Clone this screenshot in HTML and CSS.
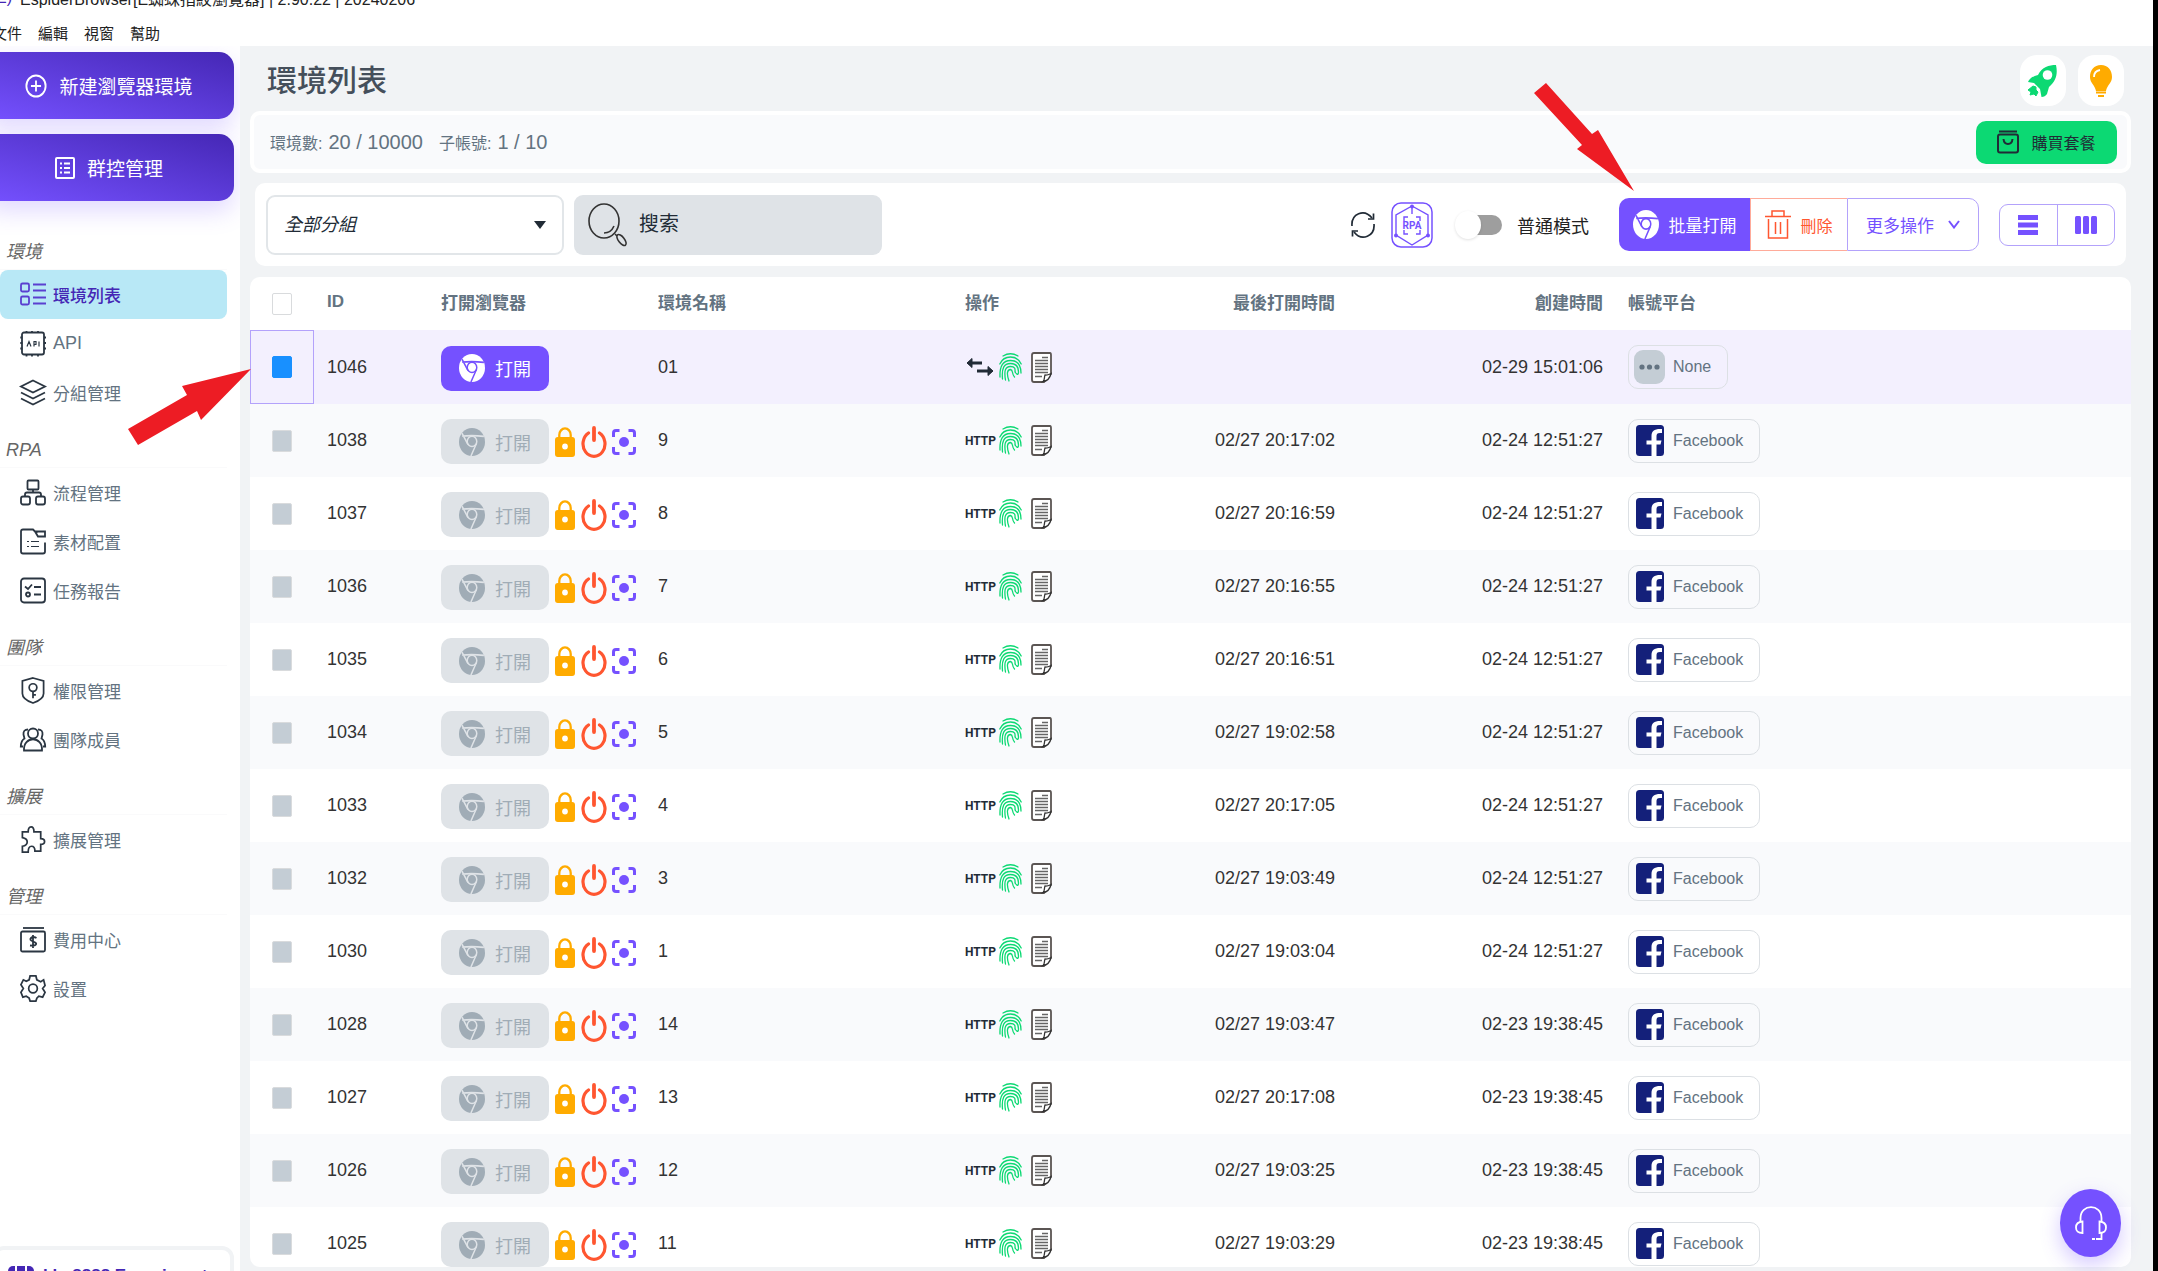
FILE: index.html
```html
<!DOCTYPE html>
<html lang="zh-Hant">
<head>
<meta charset="utf-8">
<title>EspiderBrowser</title>
<link rel="stylesheet" href="styles.css">
</head>
<body>
<svg class="sprite" aria-hidden="true">
  <symbol id="chrome" viewBox="0 0 24 24" preserveAspectRatio="none"><circle cx="12" cy="12" r="12" fill="currentColor"/><g fill="none" stroke="var(--cut)" stroke-width="1.4"><circle cx="12" cy="11.500" r="4.400"/><path d="M3 7Q12 6 23 7.200M2.800 4.500L8.200 14M16 13.500L11 24"/></g></symbol>
  <symbol id="lock" viewBox="0 0 21 30" preserveAspectRatio="none"><path d="M4.500 12V8a6 6.600 0 0 1 12 0v4" fill="none" stroke="#ffab00" stroke-width="2.400"/><rect y="10" width="21" height="20" rx="3" fill="#ffab00"/><circle cx="10.500" cy="19.500" r="3" fill="#fff"/></symbol>
  <symbol id="power" viewBox="0 0 26 32" preserveAspectRatio="none"><path d="M7.500 7A11 12.500 0 1 0 18.500 7" fill="none" stroke="#ff5630" stroke-width="3.200" stroke-linecap="round"/><path d="M13 2v12" stroke="#ff5630" stroke-width="3.800" stroke-linecap="round"/></symbol>
  <symbol id="scan" viewBox="0 0 24 26" preserveAspectRatio="none"><path d="M1.500 8V4Q1.500 1.500 4 1.500H7.500M16.500 1.500H20Q22.500 1.500 22.500 4V8M22.500 18v4q0 2.500-2.500 2.500H16.500M7.500 24.500H4Q1.500 24.500 1.500 22V18" fill="none" stroke="#7551ff" stroke-width="3"/><circle cx="12" cy="13" r="5" fill="#7551ff"/></symbol>
  <symbol id="finger" viewBox="0 0 23 29" preserveAspectRatio="none"><g fill="none" stroke="#0cd973" stroke-width="1.300" stroke-linecap="round"><path d="M4 3Q11.500-1.500 19 3M.8 11Q4 4 11.500 4T22.200 11M1 24C.5 13 4 7.500 11.500 7.500S22 13 22 20M3.500 26C2.500 15 5 10.500 11.500 10.500S19.500 15 19.500 19 16.500 21 16 18M6.500 27C5 18 6 13.500 11.500 13.500S16 17 16 19M10 28C7.500 21 8 16.500 11.500 16.500 14.500 17 12.500 21 15.500 24 20 24 21.500 22M11 22Q12 26 18 26.500M12 26L14 28.500"/></g></symbol>
  <symbol id="doc" viewBox="0 0 21 31" preserveAspectRatio="none"><path d="M3 1H19Q20 1 20 3V22L13 30H3Q1 30 1 28V3Q1 1 3 1Z" fill="#fff" stroke="#5b5553" stroke-width="1.800"/><path d="M11 5.500h6M4 8.500h13M4 11.500h13M4 14.500h13M4 17.500h13M4 20.500h13M4 24.500h7" stroke="#666" stroke-width="1.400"/><path d="M12 29.500C14 28 13 25 14 23 16 23.500 18 22.500 20 21.500 19 26 16 29 12 29.500Z" fill="#fff" stroke="#333" stroke-width="1.300"/></symbol>
  <symbol id="swap" viewBox="0 0 30 24"><path d="M6 8H17M12 16H24" stroke="#212b36" stroke-width="3"/><path d="M2 8L7 3.500V12.500ZM28 16L23 11.500V20.500Z" fill="#212b36" stroke="#212b36" stroke-linejoin="round"/></symbol>
  <symbol id="fb" viewBox="0 0 28 31" preserveAspectRatio="none"><rect width="28" height="31" rx="3.500" fill="#14207a"/><path d="M15.500 31V19.500H10.500V15.500H15.500V11C15.500 6 18.500 3.500 26 4V8C21.500 7.500 20.500 8.500 20.500 11.500V15.500H25.500L24.500 19.500H20.500V31Z" fill="#fff"/></symbol>
</svg>

<div class="window">
  <header class="titlebar">
    <span class="app-mark">(E)</span>
    <span class="app-title">EspiderBrowser[E蜘蛛指紋瀏覽器] | 2.90.22 | 20240206</span>
    <span class="window-controls">
      <svg width="14" height="14" viewBox="0 0 14 14"><rect x="1" y="1" width="12" height="12" fill="none" stroke="#222" stroke-width="1.500"/></svg>
      <svg width="14" height="14" viewBox="0 0 14 14"><path d="M1 1L13 13M13 1L1 13" stroke="#222" stroke-width="1.500"/></svg>
    </span>
  </header>
  <nav class="menubar"><a href="#">文件</a><a href="#">編輯</a><a href="#">視窗</a><a href="#">幫助</a></nav>

  <div class="body">
    <aside class="sidebar">
      <div class="primary-actions">
        <button class="big-button" type="button"><svg width="22" height="24" viewBox="0 0 24 24" preserveAspectRatio="none"><g fill="none" stroke="#fff" stroke-width="2"><circle cx="12" cy="12" r="10.500"/><path d="M12 6.500V17.500M6.500 12H17.500"/></g></svg>新建瀏覽器環境</button>
        <button class="big-button" type="button"><svg width="20" height="22" viewBox="0 0 20 22"><rect x="1" y="1" width="18" height="20" rx="1" fill="none" stroke="#fff" stroke-width="2"/><path d="M5 6.500h2M9 6.500h6M5 11h2M9 11h6M5 15.500h2M9 15.500h6" stroke="#fff" stroke-width="2"/></svg>群控管理</button>
      </div>
      <nav class="side-nav">
        <h2>環境</h2>
        <a class="active" href="#"><svg viewBox="0 0 26 26"><rect x="1" y="2" width="8" height="8" rx="1.500"/><rect x="1" y="15" width="8" height="8" rx="1.500"/><path d="M13 3h13M13 9h13M13 16h13M13 22h13"/></svg>環境列表</a>
        <a href="#" class="latin"><svg viewBox="0 0 26 26"><rect x="2" y="2" width="22" height="22" rx="2"/><path d="M6.500 .5v2M12 .5v2M18 .5v2M6.500 24v2M12 24v2M18 24v2M.3 7h2M.3 12.500h2M.3 18h2M24 7h2M24 12.500h2M24 18h2"/><path class="thin" d="M7 16L9 11 11 16M14 16V11h2v3h-2M19 11v5"/></svg>API</a>
        <a href="#"><svg viewBox="0 0 26 26"><path d="M13 1L25 7 13 13 1 7ZM1 13L13 19 25 13M1 19L13 25 25 19"/></svg>分組管理</a>
        <h2>RPA</h2>
        <a href="#"><svg viewBox="0 0 26 26"><rect x="7.500" y="1" width="11" height="9" rx="1"/><rect x="1" y="17" width="9" height="8" rx="2"/><rect x="16" y="17" width="9" height="8" rx="2"/><path d="M13 10v3M5 17V15Q5 13 7 13H19Q21 13 21 15V17"/></svg>流程管理</a>
        <a href="#"><svg viewBox="0 0 26 26"><path d="M25 14V23Q25 25 23 25H3Q1 25 1 23V3Q1 1 3 1H13L17 5M15 3H25V8H18L15 3"/><path class="thin" d="M7 13h2M11 13h8M7 18h2M11 18h8"/></svg>素材配置</a>
        <a href="#"><svg viewBox="0 0 26 26"><rect x="1" y="1" width="24" height="24" rx="3"/><path d="M5 9L8 11.500 12 7M14 9.500h7M14 17h7"/><circle cx="8" cy="17" r="2"/></svg>任務報告</a>
        <h2>團隊</h2>
        <a href="#"><svg viewBox="0 0 26 28"><path d="M13 1L24 4V17Q24 23 13 27 2 23 2 17V4Z"/><circle cx="13" cy="11" r="4"/><path d="M13 15V22M13 18.500h3"/></svg>權限管理</a>
        <a href="#"><svg viewBox="0 0 26 26"><circle cx="13" cy="7" r="5"/><path d="M4 24C3 9 23 9 22 24ZM8 3Q3 3 3.500 8L4.500 12Q1 14 .8 20H3M18 3Q23 3 22.500 8L21.500 12Q25 14 25.200 20H23"/></svg>團隊成員</a>
        <h2>擴展</h2>
        <a href="#"><svg viewBox="0 0 26 28"><path d="M2 6H8Q8 1 11 1T14 6H21V13Q25 13 25 16T21 19V26H15Q15 21 11.500 21T8 27H2V21Q7 20 7 16.500T2 12Z"/></svg>擴展管理</a>
        <h2>管理</h2>
        <a href="#"><svg viewBox="0 0 26 26"><path d="M3 1.500H24"/><rect x="1" y="5" width="24" height="20" rx="1.500"/><path d="M16.500 11.500Q13 9.500 11 11.500T13 15 16 18 10 19M13 8.500V21.500"/></svg>費用中心</a>
        <a href="#"><svg viewBox="0 0 26 28"><path d="M10 1H16L17 5 21 7 24 5 25.500 11 23 14 25.500 18 23 23 19 22 17 24 16 27H10L9 24 6 22 2.500 23 .5 18 3 14 .5 10 3 5 6 6.500 9 5Z"/><circle cx="13" cy="14" r="4.500"/></svg>設置</a>
      </nav>
      <div class="account-card"><svg width="26" height="26" viewBox="0 0 26 26"><rect width="26" height="26" rx="5" fill="#4527b5"/><path d="M8 0v7M18 0v7" stroke="#fff" stroke-width="2"/></svg>klm8888 Experiment</div>
    </aside>

    <main class="main">
      <div class="page-head">
        <h1>環境列表</h1>
        <button class="round-button" type="button" aria-label="rocket"><svg width="30" height="34" viewBox="0 0 30 34"><path d="M28 1C30 10 28 17 21 23L19 30Q17 33 13.500 33L12 25 6 19 0 18Q2 13 10 11C14 3 21 1 28 1Z" fill="#0cd973"/><circle cx="19.500" cy="11" r="4.800" fill="#fff"/><path d="M5 22L8 23 8 26 10 28 8 32 6 30 2 31 3 28 0 26Z" fill="#0cd973" stroke="#0cd973"/></svg></button>
        <button class="round-button" type="button" aria-label="tips"><svg width="24" height="34" viewBox="0 0 24 34"><path d="M12 1C5 1 1 6 1 13 1 19 6 21 7 27H17C18 21 23 19 23 13 23 6 19 1 12 1Z" fill="#ffab00"/><path d="M7 28.500H17M9 32H15" stroke="#ffab00" stroke-width="2"/><path d="M5 13Q5 7 11 6" fill="none" stroke="#fff" stroke-width="1.800"/></svg></button>
      </div>

      <section class="quota">
        <span>環境數:</span><b>20 / 10000</b><span class="second">子帳號:</span><b>1 / 10</b>
        <button class="buy" type="button"><svg width="22" height="24" viewBox="0 0 22 24"><g fill="none" stroke="#212b36" stroke-width="2"><path d="M2 1.500H20"/><rect x="1" y="4.500" width="20" height="18" rx="2"/><path d="M6.500 9Q7 14 11 14T15.500 9"/></g></svg>購買套餐</button>
      </section>

      <section class="toolbar">
        <div class="group-select">
          <select aria-label="分組"><option>全部分組</option></select>
          <svg width="12" height="8" viewBox="0 0 12 8"><path d="M0 0H12L6 8Z" fill="#212b36"/></svg>
        </div>
        <label class="search">
          <svg width="40" height="44" viewBox="0 0 40 44"><g fill="none" stroke="#333" stroke-width="1.600"><ellipse cx="16" cy="18" rx="15" ry="17"/><path d="M26 23Q23 30 16 30M27 31L29 33"/><ellipse cx="33.500" cy="37" rx="3" ry="6.500" transform="rotate(-38 33.500 37)"/></g></svg>
          <input type="text" placeholder="搜索" aria-label="搜索">
        </label>
        <button class="bare refresh" type="button" aria-label="refresh"><svg width="24" height="28" viewBox="0 0 24 28"><g fill="none" stroke="#212b36" stroke-width="1.700"><path d="M1 15C0 3 13-3 21 7M23 13C24 25 11 31 3 21"/><path d="M22.500 2.500V8H17M1.500 25.500V20H7"/></g></svg></button>
        <button class="bare rpa" type="button" aria-label="RPA"><svg width="42" height="46" viewBox="0 0 42 46"><rect x="1" y="1" width="40" height="44" rx="9" fill="none" stroke="#7551ff" stroke-width="1.500"/><g fill="none" stroke="#7551ff" stroke-width="1.400"><path d="M21 4L37 13V33L21 43 5 33V13ZM21 4V12"/><path d="M13 19V15H17M25 15H29V19M13 28V32H17M25 32H29V28"/></g><circle cx="21" cy="4.500" r="2" fill="#7551ff"/><circle cx="5" cy="33.500" r="2" fill="#7551ff"/><circle cx="37" cy="33.500" r="2" fill="#7551ff"/><text x="21" y="27" text-anchor="middle">RPA</text></svg></button>
        <label class="mode"><input type="checkbox" role="switch">普通模式</label>
        <div class="batch">
          <button class="batch-open" type="button"><svg width="26" height="29"><use href="#chrome"/></svg>批量打開</button>
          <button class="batch-delete" type="button"><svg width="26" height="30" viewBox="0 0 26 30"><path d="M0 6.500H26M7 6V1H19V6M3.500 9V28H22.500V9M10.500 12V24M15.500 12V24" fill="none" stroke="#ff5630" stroke-width="1.500"/></svg>刪除</button>
          <button class="batch-more" type="button">更多操作<svg width="12" height="9" viewBox="0 0 12 9"><path d="M1 1L6 7.500 11 1" fill="none" stroke="#7551ff" stroke-width="2"/></svg></button>
        </div>
        <div class="views">
          <button type="button" aria-label="rows"><svg width="20" height="20" viewBox="0 0 20 20"><path d="M0 2.500H20M0 10H20M0 17.500H20" stroke="#7551ff" stroke-width="5"/></svg></button>
          <button type="button" aria-label="columns"><svg width="22" height="18" viewBox="0 0 22 18"><g fill="#7551ff"><rect width="6" height="18" rx="1.500"/><rect x="8" width="6" height="18" rx="1.500"/><rect x="16" width="6" height="18" rx="1.500"/></g></svg></button>
        </div>
      </section>

      <section class="list">
        <table>
          <colgroup><col class="c-check"><col class="c-id"><col class="c-open"><col class="c-name"><col class="c-ops"><col class="c-last"><col class="c-made"><col></colgroup>
          <thead><tr><th class="check"><input type="checkbox" aria-label="全選"></th><th>ID</th><th>打開瀏覽器</th><th>環境名稱</th><th>操作</th><th class="right">最後打開時間</th><th class="right">創建時間</th><th>帳號平台</th></tr></thead>
          <tbody id="rows"></tbody>
        </table>
      </section>
    </main>
  </div>

  <button class="support" type="button" aria-label="support"><svg width="32" height="34" viewBox="0 0 32 34"><g fill="none" stroke="#fff" stroke-width="1.800"><path d="M5.500 16V12C5.500-2.500 26.500-2.500 26.500 12V16"/><path d="M7.500 15.500V27Q1 27 1 21.500T7.500 15.500ZM24.500 15.500V27Q31 27 31 21.500T24.500 15.500Z"/><path d="M26.500 27V33H21M20 33H17"/></g></svg></button>
  <svg class="pointer pointer-row" width="123" height="77" viewBox="0 0 123 77"><path d="M123 0L54 17 59 26 0 60 10 76 69 42 73 51Z" fill="#ed1c24"/></svg>
  <svg class="pointer pointer-batch" width="100" height="108" viewBox="0 0 100 108"><path d="M100 108L64 47 58 51 12 0 0 10 48 62 43 66Z" fill="#ed1c24"/></svg>
</div>
<script src="script.js"></script>
</body>
</html>
```
FILE: styles.css
```css
* { box-sizing: border-box; }
html, body { height: 100%; }
body {
  margin: 0;
  overflow: hidden;
  font-family: "Liberation Sans", "Noto Sans CJK TC", sans-serif;
  font-size: 18px;
  color: #333;
  background: #fff;
}
a { color: inherit; text-decoration: none; }
button, input, select { font: inherit; color: inherit; margin: 0; }
button { border: 0; background: none; padding: 0; display: flex; align-items: center; justify-content: center; cursor: pointer; }
svg { flex: none; display: block; }
.sprite { position: absolute; width: 0; height: 0; }

.window { position: relative; height: 100vh; overflow: hidden; display: flex; flex-direction: column; border-right: 5px solid #000; }
.titlebar { flex: none; height: 32px; margin-top: -18px; display: flex; align-items: center; gap: 8px; font-size: 16px; white-space: nowrap; color: #222; }
.app-mark { width: 12px; direction: rtl; color: #4527b5; overflow: hidden; }
.window-controls { margin-left: auto; margin-right: 22px; display: flex; gap: 46px; padding-bottom: 10px; }
.menubar { flex: none; height: 32px; padding-top: 4px; margin-left: -8px; display: flex; align-items: center; gap: 16px; font-size: 15px; color: #222; }

.body { flex: 1; min-height: 0; display: flex; }
.sidebar { flex: none; width: 240px; padding-top: 6px; display: flex; flex-direction: column; overflow: hidden; }
.primary-actions { display: grid; gap: 15px; margin: 0 6px 18px -16px; }
.big-button { height: 67px; border-radius: 15px; gap: 12px; color: #fff; font-size: 19px; background: linear-gradient(15deg, #7551ff, #4527b5); box-shadow: 0 10px 24px rgba(117, 81, 255, .22); }
.side-nav { display: flex; flex-direction: column; padding-right: 13px; }
.side-nav h2 { margin: 0; height: 51px; padding: 16px 0 0 6px; border-bottom: 1px solid #fafafb; font-size: 18px; font-weight: 400; font-style: italic; line-height: 34px; color: #666; }
.side-nav a { height: 49px; padding-left: 20px; display: flex; align-items: center; gap: 7px; font-size: 17px; color: #637381; border-radius: 8px; }
.side-nav .latin { font-size: 18px; }
.side-nav svg { width: 26px; height: 27px; fill: none; stroke: #2b3642; stroke-width: 1.8; overflow: visible; }
.side-nav svg .thin { stroke-width: 1.2; }
.side-nav .active { background: #b8e8f6; color: #4527b5; font-weight: 500; }
.side-nav .active svg { stroke: #5a3fd0; }
.account-card { flex: none; height: 60px; margin: auto 6px -35px -8px; padding: 16px 0 0 12px; border: 4px solid #f1f3f5; border-radius: 12px; display: flex; gap: 9px; font-size: 17px; font-weight: 700; color: #4527b5; white-space: nowrap; }

.main { flex: 1; min-width: 0; padding: 0 22px 4px 10px; background: #f1f3f5; display: flex; flex-direction: column; }
.page-head { flex: none; height: 65px; padding: 4px 7px 0 17px; display: flex; align-items: center; gap: 12px; }
.page-head h1 { margin: 0 auto 0 0; font-size: 30px; font-weight: 500; line-height: 40px; color: #454f5b; }
.round-button { width: 46px; height: 51px; border-radius: 17px; background: #fff; }
.quota { flex: none; height: 62px; padding: 0 10px 0 16px; border: 4px solid #fff; border-radius: 10px; background: #f9fafc; display: flex; align-items: center; gap: 6px; font-size: 16px; color: #637381; }
.quota b { font-size: 20px; font-weight: 400; }
.quota .second { margin-left: 10px; }
.buy { width: 141px; height: 43px; margin-left: auto; border-radius: 10px; gap: 12px; background: #0cd973; color: #212b36; font-size: 16px; }

.toolbar { flex: none; height: 83px; margin: 10px 5px 11px; padding: 0 11px; border-radius: 10px; background: #fff; display: flex; align-items: center; }
.group-select { width: 298px; height: 60px; display: grid; align-items: center; }
.group-select > * { grid-area: 1 / 1; }
.group-select select { width: 100%; height: 100%; padding: 0 16px; appearance: none; border: 2px solid #e2e6e9; border-radius: 9px; background: #fff; font-style: italic; color: #212b36; }
.group-select svg { justify-self: end; margin-right: 18px; pointer-events: none; }
.search { width: 308px; height: 60px; margin: 0 auto 0 10px; padding-left: 14px; border-radius: 9px; background: #dfe3e7; display: flex; align-items: center; gap: 11px; }
.search input { flex: 1; min-width: 0; border: 0; padding: 0; outline: 0; background: none; font-size: 20px; }
.search input::placeholder { color: #212b36; opacity: 1; }
.rpa { margin: 0 22px 0 16px; }
.rpa text { font-family: Roboto, sans-serif; font-size: 10px; font-weight: 700; fill: #7551ff; }
.mode { display: flex; align-items: center; gap: 15px; margin-right: 30px; white-space: nowrap; color: #222; }
.mode input { appearance: none; position: relative; width: 47px; height: 20px; border-radius: 10px; background: linear-gradient(90deg, #fff 12px, #9e9e9e 12px); }
.mode input::before { content: ""; position: absolute; left: 0; top: -4px; width: 26px; height: 28px; border-radius: 50%; background: #fff; box-shadow: 0 1px 3px rgba(0, 0, 0, .12); }
.batch { height: 53px; display: flex; margin-right: 20px; font-size: 17px; }
.batch-open { width: 131px; gap: 10px; border-radius: 10px 0 0 10px; background: #7551ff; color: #fff; --cut: #7551ff; }
.batch-delete { width: 97px; gap: 9px; border: 1px solid #ffab9a; border-right: 0; color: #ff5630; font-size: 16px; }
.batch-more { width: 132px; gap: 14px; border: 1px solid #b3a2fb; border-radius: 0 10px 10px 0; color: #7551ff; }
.views { display: flex; height: 42px; width: 116px; border: 1px solid #b3a2fb; border-radius: 9px; }
.views button { flex: 1; }
.views button + button { border-left: 1px solid #b3a2fb; }

.list { flex: 1; min-height: 0; overflow: hidden; border-radius: 10px; background: #fff; }
table { width: 100%; table-layout: fixed; border-collapse: separate; border-spacing: 0; }
.c-check { width: 64px; } .c-id { width: 114px; } .c-open { width: 217px; } .c-name { width: 307px; }
.c-ops { width: 198px; } .c-last { width: 198px; } .c-made { width: 268px; }
th, td { padding: 0 13px; text-align: left; white-space: nowrap; }
th { height: 53px; padding-bottom: 4px; font-size: 17px; font-weight: 700; color: #637381; }
td { height: 73px; }
th:last-child, td:last-child { padding-left: 12px; }
.right { text-align: right; }
.check { padding: 0 0 0 22px; }
.check input { appearance: none; display: block; width: 20px; height: 22px; border: 1px solid #d9dbdd; border-radius: 2px; background: #fff; }
.check input:disabled { background: #c4cdd5; }
.check input:checked { background: #1890ff; border-color: #1890ff; }
tbody tr:nth-child(even) { background: #f9fafc; }
tbody .selected { background: #f3f0fe; }
.selected td { height: 74px; }
.selected .check { border: 1px solid #b3a2fb; padding-left: 21px; }
.actions, .ops { display: flex; align-items: center; }
.actions { padding-top: 2px; }
.open { flex: none; width: 108px; height: 45px; border-radius: 10px; gap: 10px; background: #dfe3e7; color: #a0acb6; --cut: #dfe3e7; }
.selected .open { background: #7551ff; color: #fff; --cut: #7551ff; }
.actions .lock, .actions .power { margin-left: 6px; }
.actions .scan { margin-left: 5px; }
.ops .http { width: 30px; margin-right: 4px; font-family: Roboto, sans-serif; font-size: 12px; font-weight: 700; color: #212b36; }
.ops .doc { margin-left: 9px; }
.chip { display: inline-flex; align-items: center; gap: 9px; height: 44px; padding: 0 16px 0 7px; border: 1px solid #dce0e4; border-radius: 10px; font-size: 16px; color: #637381; vertical-align: middle; }
.chip.none { gap: 8px; padding-left: 5px; }

.support { position: absolute; right: 32px; bottom: 14px; width: 61px; height: 68px; border-radius: 50%; background: #7551ff; box-shadow: 0 8px 20px rgba(117, 81, 255, .3); }
.pointer { position: absolute; pointer-events: none; }
.pointer-row { left: 128px; top: 369px; }
.pointer-batch { right: 519px; top: 83px; }
```
FILE: script.js
```js
const rows = [
  ['1046', '01', '', '02-29 15:01:06'],
  ['1038', '9', '02/27 20:17:02', '02-24 12:51:27'],
  ['1037', '8', '02/27 20:16:59', '02-24 12:51:27'],
  ['1036', '7', '02/27 20:16:55', '02-24 12:51:27'],
  ['1035', '6', '02/27 20:16:51', '02-24 12:51:27'],
  ['1034', '5', '02/27 19:02:58', '02-24 12:51:27'],
  ['1033', '4', '02/27 20:17:05', '02-24 12:51:27'],
  ['1032', '3', '02/27 19:03:49', '02-24 12:51:27'],
  ['1030', '1', '02/27 19:03:04', '02-24 12:51:27'],
  ['1028', '14', '02/27 19:03:47', '02-23 19:38:45'],
  ['1027', '13', '02/27 20:17:08', '02-23 19:38:45'],
  ['1026', '12', '02/27 19:03:25', '02-23 19:38:45'],
  ['1025', '11', '02/27 19:03:29', '02-23 19:38:45']
];
const icon = (id, w, h) => `<svg class="${id}" width="${w}" height="${h}"><use href="#${id}"/></svg>`;
document.getElementById('rows').innerHTML = rows.map(([id, name, last, made], i) => {
  const first = i === 0;
  return `<tr class="${first ? 'selected' : ''}">
    <td class="check"><input type="checkbox" aria-label="${id}" ${first ? 'checked' : 'disabled'}></td>
    <td>${id}</td>
    <td><div class="actions"><button class="open" type="button" ${first ? '' : 'disabled'}>${icon('chrome', 26, 28)}打開</button>${first ? '' : icon('lock', 20, 30) + icon('power', 26, 32) + icon('scan', 24, 26)}</div></td>
    <td>${name}</td>
    <td><div class="ops"><span class="http">${first ? icon('swap', 30, 24) : 'HTTP'}</span>${icon('finger', 23, 29)}${icon('doc', 21, 31)}</div></td>
    <td class="right">${last}</td>
    <td class="right">${made}</td>
    <td>${first
      ? '<span class="chip none"><svg width="31" height="34" viewBox="0 0 31 34"><rect width="31" height="34" rx="9" fill="#c4cdd5"/><g fill="#637381"><circle cx="8" cy="17" r="2.600"/><circle cx="15.500" cy="17" r="2.600"/><circle cx="23" cy="17" r="2.600"/></g></svg>None</span>'
      : `<span class="chip">${icon('fb', 28, 31)}Facebook</span>`}</td>
  </tr>`;
}).join('');
```
